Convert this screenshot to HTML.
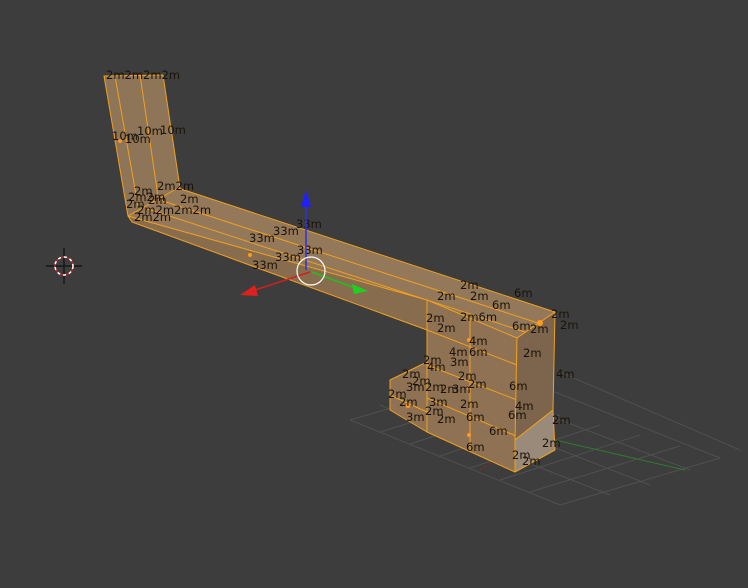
<!DOCTYPE html>
<html><head><meta charset="utf-8"><style>
html,body{margin:0;padding:0;background:#3d3d3d;width:748px;height:588px;overflow:hidden}
svg{display:block}
text{font-family:"DejaVu Sans","Liberation Sans",sans-serif;font-size:11.5px;fill:#1a1208}
</style></head><body>
<svg width="748" height="588" viewBox="0 0 748 588" xmlns="http://www.w3.org/2000/svg">
<rect width="748" height="588" fill="#3d3d3d"/>
<g stroke="#505050" stroke-width="1" fill="none">
<path d="M350 420 L470 385 M380 432 L500 395 M410 444 L530 405 M440 456 L560 415 M470 468 L600 425 M500 480 L640 435 M530 492 L680 446 M560 505 L720 458"/>
<path d="M350 420 L560 505 M380 405 L610 495 M420 395 L650 485 M470 385 L690 470 M520 378 L720 458 M560 372 L740 450"/>
</g>
<path d="M480 470 L560 420" stroke="#7a3030" stroke-width="1" stroke-dasharray="3,2"/>
<path d="M555 440 L685 470" stroke="#2f7a2f" stroke-width="1"/>
<g stroke="#f0a020" stroke-width="1" stroke-linejoin="round">
<polygon points="104,76 163,75 180,188 132,215 128,216" fill="#8e7558"/>
<path d="M115 76 L138 206 M140 75 L158 196" fill="none"/>
<polygon points="178,188 555,312 517,338 128,216" fill="#937859"/>
<path d="M160 200 L538 323 M145 208 L525 332" fill="none"/>
<polygon points="128,216 132,222 427,330 427,300" fill="#886c4e"/>
<polygon points="427,300 517,338 515,472 427,432" fill="#8e7253"/>
<path d="M427 330 L517 365 M427 365 L517 400 M427 398 L516 436 M470 318 L470 450" fill="none"/>
<polygon points="517,338 555,312 553,410 515,440" fill="#7c654c"/>
<polygon points="515,440 553,410 555,450 515,472" fill="#9a8a7a"/>
<polygon points="390,380 427,362 427,432 390,410" fill="#8e7253"/>
<path d="M390 395 L427 412" fill="none"/>
</g>
<g fill="#ff9a20"><circle cx="120" cy="141" r="2"/><circle cx="250" cy="255" r="2"/><circle cx="469" cy="340" r="2"/><circle cx="469" cy="388" r="2"/><circle cx="469" cy="435" r="2"/><circle cx="408" cy="406" r="2"/><circle cx="540" cy="323" r="3"/></g>
<text x="106" y="79">2m2m2m2m</text>
<text x="112" y="140">10m</text><text x="125" y="143">10m</text><text x="137" y="135">10m</text><text x="160" y="134">10m</text>
<text x="134" y="195">2m</text><text x="157" y="190">2m2m</text><text x="128" y="201">2m2m</text><text x="148" y="204">2m</text><text x="180" y="203">2m</text><text x="126" y="208">2m</text><text x="137" y="214">2m2m2m2m</text><text x="134" y="221">2m2m</text>
<text x="296" y="228">33m</text><text x="273" y="235">33m</text><text x="249" y="242">33m</text><text x="297" y="254">33m</text><text x="275" y="261">33m</text><text x="252" y="269">33m</text>
<text x="460" y="289">2m</text><text x="437" y="300">2m</text><text x="470" y="300">2m</text><text x="514" y="297">6m</text><text x="492" y="309">6m</text>
<text x="426" y="322">2m</text><text x="460" y="321">2m6m</text><text x="437" y="332">2m</text><text x="512" y="330">6m</text><text x="530" y="333">2m</text><text x="551" y="318">2m</text><text x="560" y="329">2m</text>
<text x="469" y="345">4m</text><text x="449" y="356">4m</text><text x="469" y="356">6m</text><text x="523" y="357">2m</text>
<text x="423" y="364">2m</text><text x="427" y="371">4m</text><text x="450" y="366">3m</text><text x="556" y="378">4m</text>
<text x="402" y="378">2m</text><text x="458" y="380">2m</text><text x="412" y="385">2m</text><text x="406" y="391">3m</text><text x="425" y="391">2m</text><text x="440" y="393">2m</text><text x="452" y="393">3m</text><text x="468" y="388">2m</text><text x="509" y="390">6m</text>
<text x="388" y="398">2m</text><text x="399" y="406">2m</text><text x="429" y="406">3m</text><text x="460" y="408">2m</text><text x="515" y="410">4m</text><text x="508" y="419">6m</text>
<text x="406" y="421">3m</text><text x="425" y="415">2m</text><text x="437" y="423">2m</text><text x="466" y="421">6m</text><text x="552" y="424">2m</text>
<text x="489" y="435">6m</text><text x="542" y="447">2m</text><text x="466" y="451">6m</text><text x="512" y="459">2m</text><text x="522" y="465">2m</text>
<path d="M306 270 L306 205" stroke="#3030e0" stroke-width="1.5"/>
<polygon points="306,190 301,207 311,207" fill="#2020ff"/>
<path d="M310 272 L255 290" stroke="#d02020" stroke-width="1.5"/>
<polygon points="240,295 255,285 258,296" fill="#e02020"/>
<path d="M312 272 L355 288" stroke="#20c020" stroke-width="1.5"/>
<polygon points="368,291 352,284 354,294" fill="#20d020"/>
<circle cx="311" cy="271" r="14" fill="none" stroke="#ffffff" stroke-width="1.2"/>
<path d="M64 248 L64 284 M46 266 L82 266" stroke="#111" stroke-width="1.2"/>
<circle cx="64" cy="266" r="9" fill="none" stroke="#c02030" stroke-width="1.5"/>
<circle cx="64" cy="266" r="9" fill="none" stroke="#ffffff" stroke-width="1.5" stroke-dasharray="3,3"/>
</svg>
</body></html>
